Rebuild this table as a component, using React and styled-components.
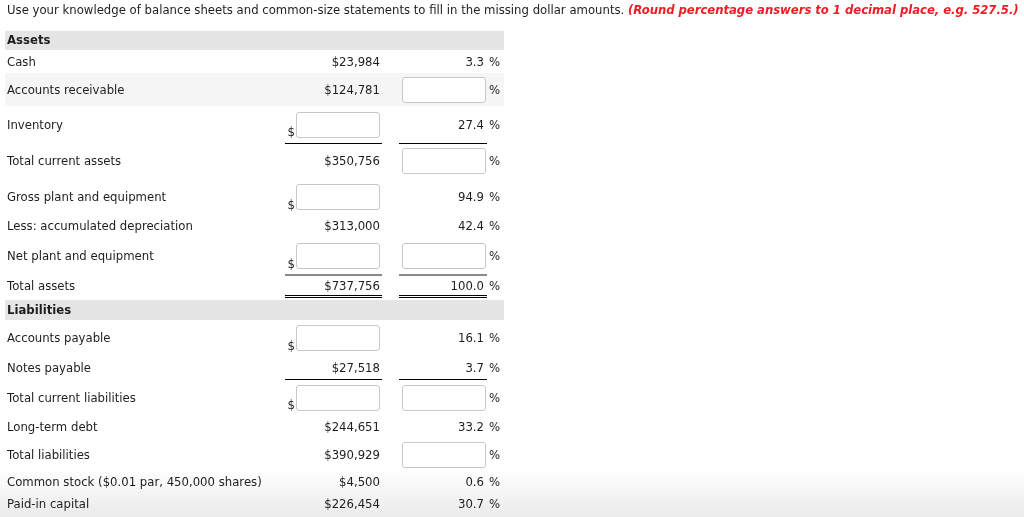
import styled, { createGlobalStyle, css } from "styled-components";

const Global = createGlobalStyle`
  body {
    margin: 0;
    background: #fff;
    color: #1e1e1e;
    font-family: "DejaVu Sans", Verdana, sans-serif;
    font-size: 11.7px;
  }
`;

const Page = styled.div`
  padding: 3px 5px 0 5px;
`;

const Prompt = styled.p`
  margin: 0 0 0 2px;
  line-height: 15px;
  white-space: nowrap;
`;

const Hint = styled.span`
  color: #ee1c25;
  font-weight: bold;
  font-style: italic;
  letter-spacing: -0.05px;
`;

const Sheet = styled.div`
  width: 499px;
  margin-top: 13px;
`;

const Row = styled.div`
  display: grid;
  grid-template-columns: 280px 97px 17px 88px 17px;
  align-items: center;
  height: ${p => p.h}px;
  background: ${p => (p.shaded ? "#f5f5f5" : "transparent")};
`;

const Header = styled.div`
  height: ${p => p.h || 19}px;
  line-height: ${p => p.h || 19}px;
  background: #e5e5e5;
  font-weight: bold;
  padding-left: 2px;
  margin-top: ${p => p.gap || 0}px;
`;

const Label = styled.div`
  padding-left: 2px;
`;

const lineStyles = css`
  ${p => p.line === "single" && "border-bottom: 1px solid #000;"}
  ${p => p.line === "total" && "border-top: 2px solid #8a8a8a; border-bottom: 3px double #000;"}
`;

const Cell = styled.div`
  height: 100%;
  display: flex;
  align-items: center;
  justify-content: flex-end;
  box-sizing: border-box;
  padding-right: ${p => p.pr || 0}px;
  ${lineStyles}
`;

const Dollar = styled.span`
  align-self: flex-end;
  margin-bottom: ${p => p.mb}px;
  margin-right: 1px;
`;

const Field = styled.input`
  box-sizing: border-box;
  width: 84px;
  height: 26px;
  border: 1px solid #c8c8c8;
  border-radius: 3px;
  background: #fff;
  padding: 0 4px;
  font: inherit;
`;

const Suffix = styled.div`
  padding-left: 2px;
`;

const Fade = styled.div`
  position: fixed;
  left: 0;
  right: 0;
  bottom: 0;
  height: 48px;
  z-index: -1;
  pointer-events: none;
  background: linear-gradient(to bottom, rgba(240, 240, 240, 0), rgba(234, 234, 234, 1));
`;

const assets = [
  { label: "Cash", amount: "$23,984", pct: "3.3", h: 23 },
  { label: "Accounts receivable", amount: "$124,781", pctInput: true, h: 33, shaded: true },
  { label: "Inventory", amountInput: true, pct: "27.4", h: 38, line: "single" },
  { label: "Total current assets", amount: "$350,756", pctInput: true, h: 34 },
  { label: "Gross plant and equipment", amountInput: true, pct: "94.9", h: 37 },
  { label: "Less: accumulated depreciation", amount: "$313,000", pct: "42.4", h: 22 },
  { label: "Net plant and equipment", amountInput: true, pctInput: true, h: 37 },
  { label: "Total assets", amount: "$737,756", pct: "100.0", h: 24, line: "total" },
];

const liabilities = [
  { label: "Accounts payable", amountInput: true, pct: "16.1", h: 36 },
  { label: "Notes payable", amount: "$27,518", pct: "3.7", h: 24, line: "single" },
  { label: "Total current liabilities", amountInput: true, pctInput: true, h: 35 },
  { label: "Long-term debt", amount: "$244,651", pct: "33.2", h: 23 },
  { label: "Total liabilities", amount: "$390,929", pctInput: true, h: 33 },
  { label: "Common stock ($0.01 par, 450,000 shares)", amount: "$4,500", pct: "0.6", h: 22 },
  { label: "Paid-in capital", amount: "$226,454", pct: "30.7", h: 21 },
];

function Line({ r }) {
  return (
    <Row h={r.h} shaded={r.shaded}>
      <Label>{r.label}</Label>
      <Cell line={r.line} pr={2}>
        {r.amountInput ? (
          <>
            <Dollar mb={r.line ? 4 : 3}>$</Dollar>
            <Field type="text" />
          </>
        ) : (
          r.amount
        )}
      </Cell>
      <div />
      <Cell line={r.line} pr={r.pctInput ? 1 : 3}>
        {r.pctInput ? <Field type="text" /> : r.pct}
      </Cell>
      <Suffix>%</Suffix>
    </Row>
  );
}

export default function App() {
  return (
    <Page>
      <Global />
      <Prompt>
        Use your knowledge of balance sheets and common-size statements to fill in the missing dollar amounts.{" "}
        <Hint>(Round percentage answers to 1 decimal place, e.g. 527.5.)</Hint>
      </Prompt>
      <Sheet>
        <Header>Assets</Header>
        {assets.map(r => <Line key={r.label} r={r} />)}
        <Header gap={2} h={20}>Liabilities</Header>
        {liabilities.map(r => <Line key={r.label} r={r} />)}
      </Sheet>
      <Fade />
    </Page>
  );
}
